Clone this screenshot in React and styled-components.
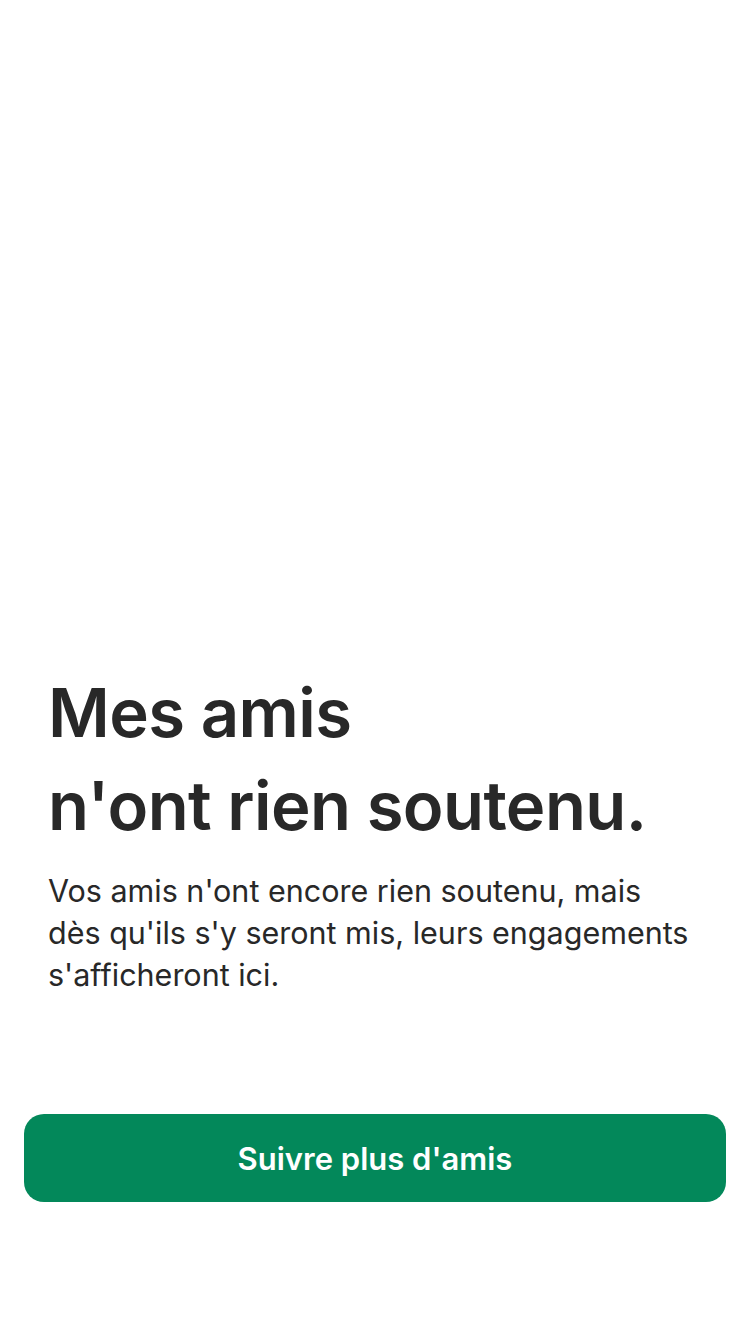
import React from "react";
import styled, { createGlobalStyle } from "styled-components";

const GlobalStyle = createGlobalStyle`
  html, body {
    margin: 0;
    padding: 0;
    background: #ffffff;
  }
  body {
    font-family: Inter, "Noto Sans", "Liberation Sans", sans-serif;
    -webkit-font-smoothing: antialiased;
  }
`;

const App = () => {
    return (
        <>
            <GlobalStyle />
            <Screen>
                <Message>
                    <Title>
                        Mes amis
                        <br />
                        n'ont rien soutenu.
                    </Title>
                    <Body>
                        Vos amis n'ont encore rien soutenu, mais dès qu'ils s'y seront mis, leurs
                        engagements s'afficheront ici.
                    </Body>
                </Message>
                <Footer>
                    <PrimaryButton type="button">Suivre plus d'amis</PrimaryButton>
                </Footer>
            </Screen>
        </>
    );
};
export default App;

const Screen = styled.div`
    width: 750px;
    height: 1334px;
    display: flex;
    flex-direction: column;
    justify-content: flex-end;
    box-sizing: border-box;
    padding-bottom: 132px;
    `
const Message = styled.div`
    padding: 0 48px;
    `
const Title = styled.h1`
    margin: 0;
    font-size: 67px;
    line-height: 93px;
    font-weight: 600;
    letter-spacing: -0.6px;
    color: #282828;
    `
const Body = styled.p`
    margin: 18px 0 0;
    font-size: 30.5px;
    line-height: 42px;
    font-weight: 400;
    color: #282828;
    `
const Footer = styled.div`
    padding: 0 24px;
    margin-top: 118px;
    `
const PrimaryButton = styled.button`
    width: 100%;
    height: 88px;
    border: none;
    border-radius: 20px;
    background: #03885a;
    color: #ffffff;
    font-family: inherit;
    font-size: 31px;
    font-weight: 600;
    `
